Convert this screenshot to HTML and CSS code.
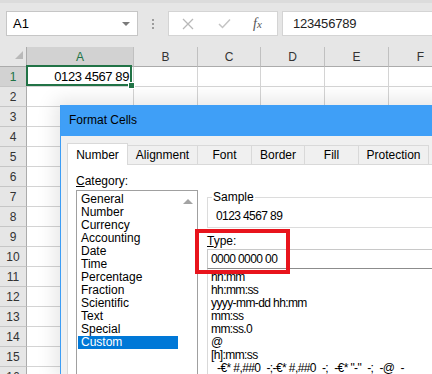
FILE: index.html
```html
<!DOCTYPE html>
<html lang="en">
<head>
<meta charset="UTF-8">
<title>Format Cells</title>
<link rel="stylesheet" href="styles.css">
</head>
<body>

<div class="topbar">
<div class="namebox">A1<i class="caret"></i></div>
<div class="grip"><b></b><b></b><b></b></div>
<div class="fbtns">
<svg width="12" height="12" viewBox="0 0 12 12"><path d="M1 1L11 11M11 1L1 11" stroke="#b8b8b8" stroke-width="1.3" fill="none"/></svg>
<svg width="13" height="11" viewBox="0 0 13 11"><path d="M1 6L4.5 9.5L12 1.5" stroke="#c4c4c4" stroke-width="1.5" fill="none"/></svg>
<span class="fx">f<span>x</span></span>
</div>
<div class="formula">123456789</div>
</div>

<div class="sheet">
<div class="corner"><i></i></div><div class="ch sel">A</div><div class="ch">B</div><div class="ch">C</div><div class="ch">D</div><div class="ch">E</div><div class="ch">F</div>
<div class="rh sel">1</div><div class="c active">0123 4567 89<i class="handle"></i></div><div class="c"></div><div class="c"></div><div class="c"></div><div class="c"></div><div class="c"></div>
<div class="rh">2</div><div class="c"></div><div class="c"></div><div class="c"></div><div class="c"></div><div class="c"></div><div class="c"></div>
<div class="rh">3</div><div class="c"></div><div class="c"></div><div class="c"></div><div class="c"></div><div class="c"></div><div class="c"></div>
<div class="rh">4</div><div class="c"></div><div class="c"></div><div class="c"></div><div class="c"></div><div class="c"></div><div class="c"></div>
<div class="rh">5</div><div class="c"></div><div class="c"></div><div class="c"></div><div class="c"></div><div class="c"></div><div class="c"></div>
<div class="rh">6</div><div class="c"></div><div class="c"></div><div class="c"></div><div class="c"></div><div class="c"></div><div class="c"></div>
<div class="rh">7</div><div class="c"></div><div class="c"></div><div class="c"></div><div class="c"></div><div class="c"></div><div class="c"></div>
<div class="rh">8</div><div class="c"></div><div class="c"></div><div class="c"></div><div class="c"></div><div class="c"></div><div class="c"></div>
<div class="rh">9</div><div class="c"></div><div class="c"></div><div class="c"></div><div class="c"></div><div class="c"></div><div class="c"></div>
<div class="rh">10</div><div class="c"></div><div class="c"></div><div class="c"></div><div class="c"></div><div class="c"></div><div class="c"></div>
<div class="rh">11</div><div class="c"></div><div class="c"></div><div class="c"></div><div class="c"></div><div class="c"></div><div class="c"></div>
<div class="rh">12</div><div class="c"></div><div class="c"></div><div class="c"></div><div class="c"></div><div class="c"></div><div class="c"></div>
<div class="rh">13</div><div class="c"></div><div class="c"></div><div class="c"></div><div class="c"></div><div class="c"></div><div class="c"></div>
<div class="rh">14</div><div class="c"></div><div class="c"></div><div class="c"></div><div class="c"></div><div class="c"></div><div class="c"></div>
<div class="rh">15</div><div class="c"></div><div class="c"></div><div class="c"></div><div class="c"></div><div class="c"></div><div class="c"></div>
<div class="rh">16</div><div class="c"></div><div class="c"></div><div class="c"></div><div class="c"></div><div class="c"></div><div class="c"></div>
</div>

<!-- Format Cells dialog floats over the sheet -->
<div class="dialog">
<div class="titlebar">Format Cells</div>
<div class="dlg-body">
<div class="tabs">
<div class="tab on" style="width:61px">Number</div>
<div class="tab" style="width:71px">Alignment</div>
<div class="tab" style="width:55px">Font</div>
<div class="tab" style="width:54px">Border</div>
<div class="tab" style="width:55px">Fill</div>
<div class="tab" style="width:71px">Protection</div>
</div>
<div class="panel">
<div class="left-col">
<div class="label"><u>C</u>ategory:</div>
<div class="catlist">
<div class="items">
<div class="item">General</div>
<div class="item">Number</div>
<div class="item">Currency</div>
<div class="item">Accounting</div>
<div class="item">Date</div>
<div class="item">Time</div>
<div class="item">Percentage</div>
<div class="item">Fraction</div>
<div class="item">Scientific</div>
<div class="item">Text</div>
<div class="item">Special</div>
<div class="item picked">Custom</div>
</div>
<div class="scroll"><i class="up"></i></div>
</div>
</div>
<div class="right-col">
<fieldset class="sample">
<legend>Sample</legend>
<div class="num">0123 4567 89</div>
</fieldset>
<div class="label type-label"><u>T</u>ype:</div>
<div class="type-input num">0000 0000 00</div>
<div class="typelist num">
<div class="item">hh:mm</div>
<div class="item">hh:mm:ss</div>
<div class="item">yyyy-mm-dd hh:mm</div>
<div class="item">mm:ss</div>
<div class="item">mm:ss.0</div>
<div class="item">@</div>
<div class="item">[h]:mm:ss</div>
<div class="item">_-€* #,##0_-;-€* #,##0_-;_-€* "-"_-;_-@_-</div>
</div>
</div>
</div>
</div>
</div>

<div class="callout"></div>

</body>
</html>
```

FILE: styles.css
```css
html, body {
height: 374px;
}
body {
margin: 0;
overflow: hidden;
background: #fff;
font-family: "Liberation Sans", Arial, sans-serif;
color: #000;
}
.topbar {
height: 47px;
box-sizing: border-box;
border-top: 3px solid #dcdcdc;
padding-top: 8px;
background: #e6e6e6;
display: flex;
align-items: flex-start;
}
.namebox {
margin-left: 6px;
width: 132px;
height: 25px;
box-sizing: border-box;
border: 1px solid #c6c6c6;
background: #fff;
font-size: 13px;
line-height: 23px;
padding-left: 6px;
padding-right: 7px;
display: flex;
justify-content: space-between;
align-items: center;
}
.caret {
width: 0;
height: 0;
border-left: 4px solid transparent;
border-right: 4px solid transparent;
border-top: 4px solid #7a7a7a;
}
.grip {
margin-left: 14px;
margin-top: 8px;
display: flex;
flex-direction: column;
gap: 2px;
}
.grip b {
width: 2px;
height: 2px;
background: #9c9c9c;
}
.fbtns {
margin-left: 14px;
width: 110px;
height: 25px;
box-sizing: border-box;
border: 1px solid #d4d4d4;
background: #fff;
display: flex;
align-items: center;
padding-left: 13px;
}
.fbtns svg:nth-child(2) {
margin-left: 24px;
}
.fx {
margin-left: 22px;
font-family: "Liberation Serif", serif;
font-style: italic;
font-size: 14px;
color: #555;
}
.fx span {
font-size: 11px;
}
.formula {
margin-left: 4px;
flex: 1;
height: 25px;
box-sizing: border-box;
border: 1px solid #d4d4d4;
border-right: none;
background: #fff;
font-size: 13px;
letter-spacing: -0.2px;
line-height: 23px;
padding-left: 10px;
color: #222;
}

.sheet {
display: grid;
grid-template-columns: 27px 107px 64px 63px 64px 64px 64px;
grid-auto-rows: 20px;
}
.sheet > div {
box-sizing: border-box;
border-right: 1px solid #d4d4d4;
border-bottom: 1px solid #d4d4d4;
}
.ch, .rh, .corner {
background: #e6e6e6;
font-size: 12px;
color: #333;
display: flex;
align-items: center;
justify-content: center;
}
.sheet > .ch {
border-right-color: #c0c0c0;
border-bottom-color: #ababab;
}
.sheet > .rh {
border-right-color: #ababab;
border-bottom-color: #c6c6c6;
}
.sheet > .corner {
border-right-color: #ababab;
border-bottom-color: #ababab;
position: relative;
}
.corner i {
position: absolute;
right: 3px;
bottom: 7px;
width: 0;
height: 0;
border-left: 8px solid transparent;
border-bottom: 8px solid #b9b9b9;
}
.ch.sel, .rh.sel {
background: #d2d2d2;
color: #217346;
}
.c.active {
position: relative;
font-size: 13px;
letter-spacing: -0.4px;
text-align: right;
padding-right: 4px;
line-height: 20px;
}
.c.active::after {
content: "";
position: absolute;
top: -2px;
left: -1px;
right: 1px;
bottom: 0;
border: 2px solid #217346;
}
.handle {
position: absolute;
right: -2px;
bottom: -3px;
width: 5px;
height: 5px;
background: #217346;
border: 1px solid #fff;
z-index: 1;
}

.dialog {
position: absolute;
left: 60px;
top: 105px;
width: 380px;
height: 269px;
overflow: hidden;
border-left: 1px solid #3d9df5;
background: #f0f0f0;
box-shadow: 0 0 18px 5px rgba(0, 0, 0, 0.1);
font-size: 12px;
}
.titlebar {
height: 31px;
background: #3f9ff7;
line-height: 31px;
padding-left: 8px;
}
.dlg-body {
padding: 7px 0 0 6px;
}
.tabs {
display: flex;
align-items: flex-end;
height: 21px;
}
.tab {
height: 19px;
box-sizing: border-box;
border: 1px solid #d9d9d9;
border-bottom: none;
margin-left: -1px;
text-align: center;
line-height: 19px;
}
.tab:first-child {
margin-left: 0;
}
.tab.on {
height: 22px;
margin-bottom: -1px;
background: #fff;
line-height: 22px;
position: relative;
}
.panel {
background: #fff;
border: 1px solid #d9d9d9;
height: 220px;
padding-left: 8px;
display: flex;
}
.label {
line-height: 14px;
}
.num {
letter-spacing: -0.6px;
}
.left-col {
width: 122px;
margin-top: 9px;
}
.catlist {
margin-top: 2px;
height: 200px;
box-sizing: border-box;
border: 1px solid #a0a0a0;
display: flex;
padding: 1px 0 0 1px;
}
.items {
width: 100px;
padding-top: 1px;
}
.item {
line-height: 13px;
padding-left: 3px;
white-space: nowrap;
}
.item.picked {
background: #0078d7;
color: #fff;
}
.scroll {
flex: 1;
display: flex;
justify-content: center;
padding-top: 7px;
}
.up {
width: 0;
height: 0;
border-left: 5px solid transparent;
border-right: 5px solid transparent;
border-bottom: 5px solid #a3a3a3;
}
.right-col {
flex: 1;
margin-left: 9px;
margin-top: 25px;
}
.sample {
margin: 0;
padding: 5px 0 4px 8px;
border: 1px solid #dcdcdc;
border-right: none;
min-inline-size: 0;
line-height: 14px;
}
.sample legend {
margin-left: -4px;
padding: 0 1px;
line-height: 14px;
}
.type-label {
margin-top: 6px;
}
.type-input {
margin-top: 1px;
height: 20px;
box-sizing: border-box;
border: 1px solid #c8c8c8;
border-bottom-color: #8c8c8c;
border-right: none;
padding-left: 3px;
line-height: 18px;
}
.typelist {
border-left: 1px solid #d9d9d9;
padding-top: 2px;
height: 120px;
}

.callout {
position: absolute;
left: 195px;
top: 229px;
width: 95px;
height: 45px;
box-sizing: border-box;
border: 4px solid #e8141c;
}
```
